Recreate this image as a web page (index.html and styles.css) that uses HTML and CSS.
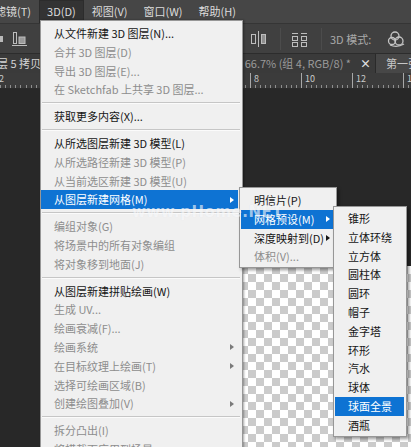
FILE: index.html
```html
<!DOCTYPE html>
<html lang="zh-CN">
<head>
<meta charset="utf-8">
<title>3D 菜单</title>
<link rel="stylesheet" href="styles.css">
</head>
<body>
<div class="app">
  <div class="menubar">
    <span class="mb-item first">滤镜(T)</span>
    <span class="mb-item open">3D(D)</span>
    <span class="mb-item">视图(V)</span>
    <span class="mb-item">窗口(W)</span>
    <span class="mb-item">帮助(H)</span>
  </div>
  <div class="toolbar">
    <svg class="tb-icon ic-a" width="6" height="14" viewBox="0 0 6 14"><rect x="0" y="4" width="3" height="6" fill="#b9b9b9"/></svg>
    <svg class="tb-icon ic-b" width="16" height="16" viewBox="0 0 16 16"><rect x="1.5" y="1.5" width="3" height="11" fill="none" stroke="#bdbdbd"/><rect x="7" y="6" width="6" height="6.5" fill="#9a9a9a" stroke="#bdbdbd"/><line x1="0" y1="14.5" x2="15" y2="14.5" stroke="#bdbdbd"/></svg>
    <svg class="tb-icon ic-c" width="18" height="18" viewBox="0 0 18 18"><rect x="1.5" y="4.5" width="4" height="9" fill="none" stroke="#bdbdbd"/><line x1="8.5" y1="1" x2="8.5" y2="17" stroke="#bdbdbd"/><rect x="11.5" y="4.5" width="4" height="9" fill="#8f8f8f" stroke="#bdbdbd"/></svg>
    <span class="tb-sep"></span>
    <svg class="tb-icon ic-d" width="18" height="18" viewBox="0 0 18 18"><line x1="1" y1="3.5" x2="7" y2="3.5" stroke="#bdbdbd"/><rect x="1.5" y="6.5" width="5" height="4" fill="none" stroke="#bdbdbd"/><rect x="1.5" y="12.5" width="5" height="4" fill="none" stroke="#bdbdbd"/><line x1="10" y1="3.5" x2="16" y2="3.5" stroke="#bdbdbd"/><rect x="10.5" y="6.5" width="5" height="4" fill="none" stroke="#bdbdbd"/><rect x="10.5" y="12.5" width="5" height="4" fill="none" stroke="#bdbdbd"/></svg>
    <span class="tb-sep"></span>
    <span class="tb-label">3D 模式:</span>
    <svg class="tb-icon ic-e" width="20" height="18" viewBox="0 0 20 18"><circle cx="8" cy="6" r="4" fill="none" stroke="#c4c4c4" stroke-width="1.3"/><circle cx="5" cy="11" r="3.5" fill="none" stroke="#c4c4c4" stroke-width="1.3"/><circle cx="12" cy="11" r="4" fill="none" stroke="#c4c4c4" stroke-width="1.3"/><path d="M3 15 Q10 18 17 14" fill="none" stroke="#c4c4c4" stroke-width="1.3"/></svg>
    <svg class="tb-icon ic-f" width="8" height="18" viewBox="0 0 8 18"><path d="M7 3 A6 6 0 0 0 7 15" fill="none" stroke="#c4c4c4" stroke-width="1.3"/></svg>
  </div>
  <div class="tabs">
    <div class="tab active">
      <span class="tab-left">层 5 拷贝</span>
      <span class="tab-title">66.7% (组 4, RGB/8) *</span>
      <span class="tab-close">×</span>
    </div>
    <div class="tab other">第一张图.psd</div>
  </div>
  <div class="ruler">
    <span class="seg">2</span>
    <span class="seg"></span>
    <span class="seg"></span>
    <span class="seg"></span>
    <span class="seg"></span>
    <span class="seg">8</span>
    <span class="seg">10</span>
    <span class="seg">12</span>
    <span class="seg">14</span>
  </div>
  <div class="canvas">
    <div class="checker"></div>
  </div>
</div>

<div class="menu main-menu">
  <div class="mi">从文件新建 3D 图层(N)...</div>
  <div class="mi dis">合并 3D 图层(D)</div>
  <div class="mi dis">导出 3D 图层(E)...</div>
  <div class="mi dis">在 Sketchfab 上共享 3D 图层...</div>
  <div class="sep"></div>
  <div class="mi">获取更多内容(X)...</div>
  <div class="sep"></div>
  <div class="mi">从所选图层新建 3D 模型(L)</div>
  <div class="mi dis">从所选路径新建 3D 模型(P)</div>
  <div class="mi dis">从当前选区新建 3D 模型(U)</div>
  <div class="mi hl"><span>从图层新建网格(M)</span><i class="arrow"></i></div>
  <div class="sep"></div>
  <div class="mi dis">编组对象(G)</div>
  <div class="mi dis">将场景中的所有对象编组</div>
  <div class="mi dis">将对象移到地面(J)</div>
  <div class="sep"></div>
  <div class="mi">从图层新建拼贴绘画(W)</div>
  <div class="mi dis">生成 UV...</div>
  <div class="mi dis">绘画衰减(F)...</div>
  <div class="mi dis"><span>绘画系统</span><i class="arrow"></i></div>
  <div class="mi dis"><span>在目标纹理上绘画(T)</span><i class="arrow"></i></div>
  <div class="mi dis">选择可绘画区域(B)</div>
  <div class="mi dis"><span>创建绘图叠加(V)</span><i class="arrow"></i></div>
  <div class="sep"></div>
  <div class="mi dis">拆分凸出(I)</div>
  <div class="mi dis">将横截面应用到场景</div>
</div>

<div class="menu sub1">
  <div class="mi">明信片(P)</div>
  <div class="mi hl"><span>网格预设(M)</span><i class="arrow"></i></div>
  <div class="mi"><span>深度映射到(D)</span><i class="arrow"></i></div>
  <div class="mi dis">体积(V)...</div>
</div>

<div class="menu sub2">
  <div class="mi">锥形</div>
  <div class="mi">立体环绕</div>
  <div class="mi">立方体</div>
  <div class="mi">圆柱体</div>
  <div class="mi">圆环</div>
  <div class="mi">帽子</div>
  <div class="mi">金字塔</div>
  <div class="mi">环形</div>
  <div class="mi">汽水</div>
  <div class="mi">球体</div>
  <div class="mi hl">球面全景</div>
  <div class="mi">酒瓶</div>
</div>

<div class="watermark">www.pHome.NET</div>
</body>
</html>
```
FILE: styles.css
```css
html, body {
  margin: 0;
  padding: 0;
}
body {
  width: 411px;
  height: 447px;
  overflow: hidden;
  position: relative;
  background: #282828;
  font-family: "Noto Sans CJK SC", "Noto Sans", sans-serif;
  font-size: 11px;
}
.app {
  display: flex;
  flex-direction: column;
  height: 447px;
}
.menubar {
  height: 23px;
  background: #464646;
  display: flex;
  align-items: stretch;
  color: #dcdcdc;
  line-height: 22px;
  white-space: nowrap;
  overflow: hidden;
}
.mb-item {
  padding: 0 8px;
}
.mb-item.first {
  margin-left: -13px;
}
.mb-item.open {
  background: #333333;
  box-shadow: inset 0 0 0 1px #2c2c2c;
}
.toolbar {
  height: 29px;
  border-top: 1px solid #353535;
  border-bottom: 1px solid #2c2c2c;
  background: #404040;
  display: flex;
  align-items: center;
  white-space: nowrap;
  overflow: hidden;
}
.tb-icon {
  flex: none;
  display: block;
}
.ic-a { margin-left: 0; }
.ic-b { margin-left: 6px; }
.ic-c { margin-left: 222px; }
.tb-sep {
  width: 1px;
  height: 22px;
  background: #2e2e2e;
  border-right: 1px solid #4c4c4c;
  margin-left: 12px;
}
.ic-d { margin-left: 10px; }
.tb-label {
  margin-left: 8px;
  color: #a9a9a9;
}
.ic-e { margin-left: 16px; }
.ic-f { margin-left: 5px; }
.tabs {
  height: 19px;
  display: flex;
  background: #333333;
  white-space: nowrap;
  overflow: hidden;
  line-height: 18px;
}
.tab.active {
  width: 375px;
  flex: none;
  display: flex;
  background: #3a3a3a;
  border-right: 1px solid #2a2a2a;
}
.tab-left {
  margin-left: -3px;
  color: #d4d4d4;
}
.tab-title {
  margin-left: auto;
  color: #9a9a9a;
}
.tab-close {
  margin-left: 9px;
  margin-right: 4px;
  color: #e0e0e0;
  font-weight: bold;
}
.tab.other {
  padding-left: 10px;
  background: #474747;
  color: #c6c6c6;
  flex: 1;
}
.ruler {
  height: 15px;
  background-color: #3b3b3b;
  border-bottom: 1px solid #2a2a2a;
  display: flex;
  overflow: hidden;
  margin-left: -5px;
}
.seg {
  flex: none;
  width: 51px;
  height: 15px;
  border-left: 1px solid #a8a8a8;
  color: #c9c9c9;
  font-size: 9px;
  line-height: 11px;
  padding-left: 3px;
  box-sizing: border-box;
  background-image: repeating-linear-gradient(to right, transparent 0 4.1px, #8e8e8e 4.1px 5.1px);
  background-size: 100% 3px;
  background-position: 0 100%;
  background-repeat: no-repeat;
}
.canvas {
  flex: 1;
  background: #282828;
  overflow: hidden;
  padding: 177px 0 0 200px;
}
.checker {
  width: 300px;
  height: 220px;
  background-color: #ffffff;
  background-image:
    linear-gradient(45deg, #cbcbcb 25%, transparent 25%, transparent 75%, #cbcbcb 75%),
    linear-gradient(45deg, #cbcbcb 25%, transparent 25%, transparent 75%, #cbcbcb 75%);
  background-size: 16px 16px;
  background-position: 0 0, 8px 8px;
}

/* menus */
.menu {
  position: absolute;
  background: #f0f0f0;
  border: 1px solid #979797;
  box-sizing: border-box;
  color: #151515;
  white-space: nowrap;
}
.main-menu {
  left: 40px;
  top: 20px;
  width: 203px;
  padding: 3px 4px 0 0;
  box-shadow: 1px 0 2px rgba(0, 0, 0, 0.35);
}
.sub1 {
  left: 239px;
  top: 187px;
  width: 98px;
  padding: 3px 1px 1px 1px;
  box-shadow: 2px 2px 3px rgba(0, 0, 0, 0.4);
}
.sub2 {
  left: 333px;
  top: 206px;
  width: 74px;
  padding: 2px 2px 1px 1px;
  box-shadow: 2px 2px 3px rgba(0, 0, 0, 0.4);
}
.mi {
  height: 18.8px;
  line-height: 18.8px;
  padding: 0 5px 0 13px;
  display: flex;
  align-items: center;
  justify-content: space-between;
}
.main-menu .mi {
  padding-right: 4px;
}
.mi.dis {
  color: #8d8d8d;
}
.mi.hl {
  background: #0e73d3;
  color: #ffffff;
}
.sep {
  height: 8px;
  margin: 0 -2px 0 1px;
  display: flex;
  align-items: center;
}
.sep::before {
  content: "";
  flex: 1;
  height: 1px;
  background: #c6c6c6;
  border-bottom: 1px solid #fbfbfb;
}
.arrow {
  width: 0;
  height: 0;
  border-left: 4px solid currentColor;
  border-top: 3.5px solid transparent;
  border-bottom: 3.5px solid transparent;
  flex: none;
}
.mi.dis .arrow {
  color: #7a7a7a;
}
.watermark {
  position: absolute;
  left: 132px;
  top: 203px;
  font-family: "DejaVu Sans", sans-serif;
  font-weight: bold;
  font-size: 15px;
  letter-spacing: 0.5px;
  color: rgba(255, 255, 255, 0.6);
  text-shadow: 0 0 1px rgba(60, 90, 140, 0.08);
  pointer-events: none;
}
```
